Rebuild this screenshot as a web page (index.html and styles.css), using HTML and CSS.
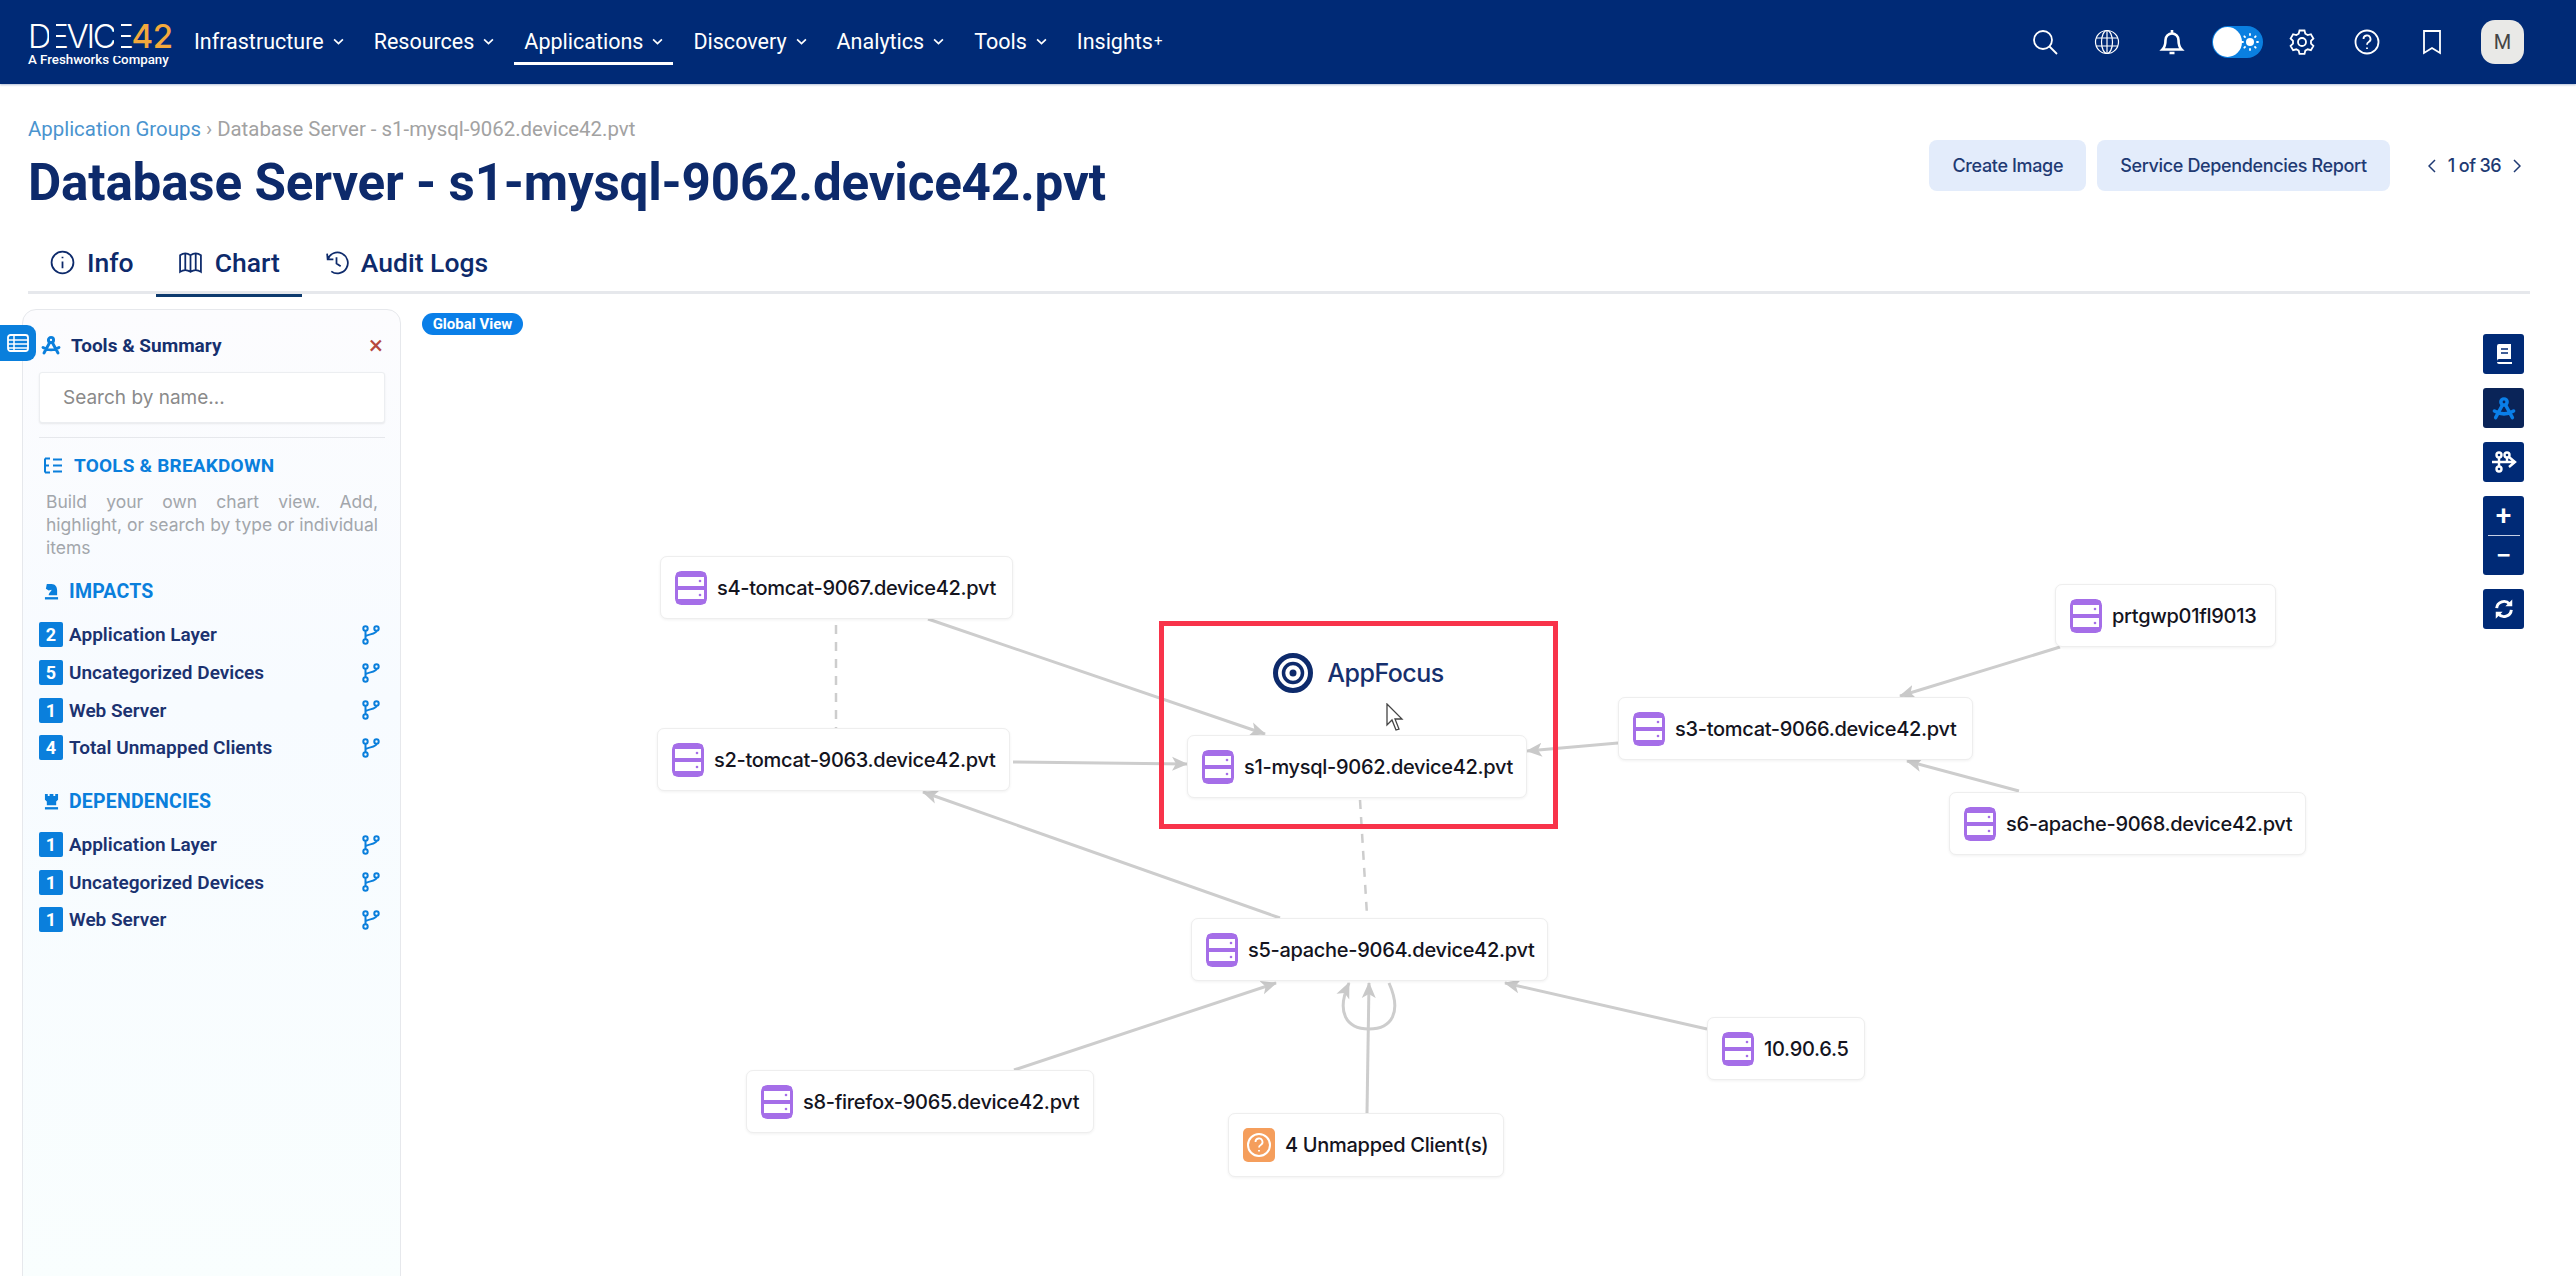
FILE: index.html
```html
<!DOCTYPE html>
<html>
<head>
  <title>Database Server - s1-mysql-9062.device42.pvt</title>
  <link rel="stylesheet" href="styles.css">
</head>
<body>
  <svg class="svg-defs" width="0" height="0">
    <defs>
      <symbol id="server" viewBox="0 0 32 34">
        <rect x="1.5" y="1.5" width="29" height="31" rx="5" fill="none" stroke="currentColor" stroke-width="3"/>
        <rect x="1.5" y="15" width="29" height="4" fill="currentColor"/>
        <rect x="1" y="1" width="30" height="5" rx="2.5" fill="currentColor"/>
        <rect x="1" y="28" width="30" height="5" rx="2.5" fill="currentColor"/>
        <circle cx="25" cy="10" r="1.3" fill="currentColor"/>
        <circle cx="25" cy="24" r="1.3" fill="currentColor"/>
      </symbol>
      <symbol id="fork" viewBox="0 0 18 20">
        <g fill="none" stroke="currentColor" stroke-width="2">
          <circle cx="3.5" cy="3.5" r="2.2"/>
          <circle cx="14.5" cy="3.5" r="2.2"/>
          <circle cx="3.5" cy="16.5" r="2.2"/>
          <path d="M3.5 5.7v8.6M14.5 5.7c0 4-11 3.300-11 6.300"/>
        </g>
      </symbol>
      <symbol id="compass" viewBox="0 0 20 20">
        <g fill="none" stroke="currentColor" stroke-width="2.900" stroke-linecap="round">
          <circle cx="10" cy="5" r="2.600"/>
          <path d="M8.700 7.500 3 18M11.300 7.500 17 18M2 12.500c5 3 11 3 16 0"/>
        </g>
      </symbol>
    </defs>
  </svg>

  <nav class="topbar">
    <div class="logo">
      <div class="logo-main">D<span class="logo-e">E</span>VIC<span class="logo-e">E</span><span class="logo-num">42</span></div>
      <div class="logo-sub">A Freshworks Company</div>
    </div>
    <ul class="menu">
      <li class="menu-item">Infrastructure<svg class="chev" viewBox="0 0 10 6"><path d="M1 1l4 4 4-4"/></svg></li>
      <li class="menu-item">Resources<svg class="chev" viewBox="0 0 10 6"><path d="M1 1l4 4 4-4"/></svg></li>
      <li class="menu-item active">Applications<svg class="chev" viewBox="0 0 10 6"><path d="M1 1l4 4 4-4"/></svg></li>
      <li class="menu-item">Discovery<svg class="chev" viewBox="0 0 10 6"><path d="M1 1l4 4 4-4"/></svg></li>
      <li class="menu-item">Analytics<svg class="chev" viewBox="0 0 10 6"><path d="M1 1l4 4 4-4"/></svg></li>
      <li class="menu-item">Tools<svg class="chev" viewBox="0 0 10 6"><path d="M1 1l4 4 4-4"/></svg></li>
      <li class="menu-item">Insights<span class="menu-plus">+</span></li>
    </ul>
    <div class="top-icons">
      <svg class="top-icon tight" viewBox="0 0 26 26"><circle cx="11" cy="11" r="9"/><path d="M17.500 17.500 25 25"/></svg>
      <svg class="top-icon thin" viewBox="0 0 26 26"><circle cx="13" cy="13" r="11.500"/><ellipse cx="13" cy="13" rx="5.500" ry="11.500"/><path d="M2 9h22M2 17h22M13 1.500v23"/></svg>
      <svg class="top-icon bell" viewBox="0 0 26 26"><path d="M3.500 20.500c2-2 3-4.500 3-9.500a6.500 6.500 0 0 1 13 0c0 5 1 7.500 3 9.500z"/><path d="M13 1v3.500M10.500 24h5"/></svg>
      <div class="toggle">
        <span class="toggle-knob"></span>
        <svg class="toggle-sun" viewBox="0 0 18 18"><circle cx="9" cy="9" r="4" fill="#fff"/><path d="M9 1v1M9 16v1M1 9h1M16 9h1M3.300 3.300l.7.7M14 14l.7.7M3.300 14.700l.7-.7M14 4l.7-.7" stroke="#fff" stroke-width="1.800" stroke-linecap="round"/></svg>
      </div>
      <svg class="top-icon" viewBox="0 0 26 26"><path d="M10.500 1.500h5l.8 3.200 2.400 1.400 3.200-.9 2.500 4.300-2.400 2.300v2.800l2.400 2.300-2.500 4.300-3.200-.9-2.400 1.400-.8 3.200h-5l-.8-3.200-2.400-1.400-3.200.9-2.500-4.300 2.400-2.300v-2.800L1.600 9.500l2.500-4.300 3.200.9 2.400-1.400z"/><circle cx="13" cy="13" r="4"/></svg>
      <svg class="top-icon" viewBox="0 0 26 26"><circle cx="13" cy="13" r="11.500"/><path d="M9.500 10a3.500 3.500 0 1 1 5.200 3c-1.200.7-1.700 1.400-1.700 2.800M13 18.500v1.500"/></svg>
      <svg class="top-icon tight" viewBox="0 0 26 26"><path d="M5 2h16v22l-8-5-8 5z"/></svg>
      <div class="avatar">M</div>
    </div>
  </nav>

  <header class="page-head">
    <div class="head-left">
      <div class="crumbs"><span class="crumb-link">Application Groups</span> › Database Server - s1-mysql-9062.device42.pvt</div>
      <h1 class="page-title">Database Server - s1-mysql-9062.device42.pvt</h1>
    </div>
    <div class="head-actions">
      <button class="soft-btn">Create Image</button>
      <button class="soft-btn">Service Dependencies Report</button>
      <div class="pager">
        <svg class="pager-arrow" viewBox="0 0 8 14"><path d="M7 1 1 7l6 6"/></svg>
        <span>1 of 36</span>
        <svg class="pager-arrow" viewBox="0 0 8 14"><path d="m1 1 6 6-6 6"/></svg>
      </div>
    </div>
  </header>

  <div class="tabs">
    <div class="tab">
      <svg class="tab-icon" viewBox="0 0 24 24"><circle cx="12" cy="12" r="10.500"/><path d="M12 11v6.500M12 6.500V8"/></svg>Info
    </div>
    <div class="tab active">
      <svg class="tab-icon" viewBox="0 0 24 24"><path d="M2 5c3-2 7-2 10 0 3-2 7-2 10 0v16c-3-2-7-2-10 0-3-2-7-2-10 0zM12 5v16M7 3.500v16M17 3.500v16"/></svg>Chart
    </div>
    <div class="tab">
      <svg class="tab-icon" viewBox="0 0 24 24"><path d="M3 3.500 3.500 9H9M3.500 9A10 10 0 1 1 7 20.500M12 7v6l4 2.500"/></svg>Audit Logs
    </div>
  </div>

  <main class="workspace">
    <aside class="sidepanel">
      <div class="panel-title">
        <svg class="panel-title-icon"><use href="#compass"/></svg>
        <span>Tools &amp; Summary</span>
        <span class="panel-close">×</span>
      </div>
      <input class="panel-search" placeholder="Search by name...">
      <hr class="panel-rule">
      <div class="section-head">
        <svg class="section-icon" viewBox="0 0 18 16"><path d="M1 1h5M1 1v14M1 8h4M1 15h5M9 2h9M9 8h9M9 14h9" fill="none" stroke="currentColor" stroke-width="2"/></svg>
        TOOLS &amp; BREAKDOWN
      </div>
      <p class="panel-desc">Build your own chart view. Add, highlight, or search by type or individual items</p>
      <div class="section-head section-sm">
        <svg class="section-icon" viewBox="0 0 16 18"><path d="M3 1h5c4 0 6 3 6 7v5H5c0-3 3-4 3-6L5 8 2 6z" fill="currentColor"/><rect x="1" y="15" width="14" height="2.500" fill="currentColor"/></svg>
        IMPACTS
      </div>
      <ul class="count-list">
        <li class="count-row"><span class="count">2</span><span class="count-name">Application Layer</span><svg class="fork"><use href="#fork"/></svg></li>
        <li class="count-row"><span class="count">5</span><span class="count-name">Uncategorized Devices</span><svg class="fork"><use href="#fork"/></svg></li>
        <li class="count-row"><span class="count">1</span><span class="count-name">Web Server</span><svg class="fork"><use href="#fork"/></svg></li>
        <li class="count-row"><span class="count">4</span><span class="count-name">Total Unmapped Clients</span><svg class="fork"><use href="#fork"/></svg></li>
      </ul>
      <div class="section-head section-sm section-dep">
        <svg class="section-icon" viewBox="0 0 16 18"><path d="M1 1h3v2h2V1h4v2h2V1h3v6l-2 2v4H3V9L1 7z" fill="currentColor"/><rect x="1" y="15" width="14" height="2.500" fill="currentColor"/></svg>
        DEPENDENCIES
      </div>
      <ul class="count-list list-dep">
        <li class="count-row"><span class="count">1</span><span class="count-name">Application Layer</span><svg class="fork"><use href="#fork"/></svg></li>
        <li class="count-row"><span class="count">1</span><span class="count-name">Uncategorized Devices</span><svg class="fork"><use href="#fork"/></svg></li>
        <li class="count-row"><span class="count">1</span><span class="count-name">Web Server</span><svg class="fork"><use href="#fork"/></svg></li>
      </ul>
    </aside>

    <div class="panel-tab">
      <svg viewBox="0 0 22 18" width="22" height="18"><rect x="1" y="1" width="20" height="16" rx="2.500" fill="none" stroke="#fff" stroke-width="1.800"/><path d="M1 6h20M1 10h20M1 14h20M7 1v16" stroke="#fff" stroke-width="1.500"/></svg>
    </div>

    <section class="chart">
      <span class="global-badge">Global View</span>

      <svg class="edges" width="2576" height="1276" viewBox="0 0 2576 1276">
        <defs>
          <marker id="head" markerWidth="18" markerHeight="16" refX="15" refY="8" orient="auto" markerUnits="userSpaceOnUse">
            <path d="M0 1 16 8 0 15 4 8z" fill="#c9c9c9"/>
          </marker>
        </defs>
        <g fill="none" stroke="#cdcdcd" stroke-width="3">
          <path marker-end="url(#head)" d="M928 619 1265 734"/>
          <path marker-end="url(#head)" d="M1013 762 1187 764"/>
          <path marker-end="url(#head)" d="M1618 743 1527 751"/>
          <path marker-end="url(#head)" d="M1280 918 923 792"/>
          <path marker-end="url(#head)" d="M1014 1070 1276 983"/>
          <path marker-end="url(#head)" d="M1367 1113 1369 983"/>
          <path marker-end="url(#head)" d="M1707 1029 1505 983"/>
          <path marker-end="url(#head)" d="M2060 647 1900 696"/>
          <path marker-end="url(#head)" d="M2019 791 1907 761"/>
          <path marker-end="url(#head)" d="M1389 983C1402 1012 1392 1029 1369 1029C1346 1029 1336 1012 1349 983"/>
          <path stroke-dasharray="9 8" stroke-width="2.500" d="M836 625V728"/>
          <path stroke-dasharray="9 8" stroke-width="2.500" d="M1360 800 1367 915"/>
        </g>
      </svg>

      <div class="focus-box">
        <div class="focus-brand">
          <svg class="focus-mark" viewBox="0 0 40 40"><circle cx="20" cy="20" r="17.500" fill="none" stroke="#0d2a6b" stroke-width="5"/><circle cx="20" cy="20" r="9.500" fill="none" stroke="#0d2a6b" stroke-width="3.500"/><circle cx="20" cy="20" r="3.500" fill="#0d2a6b"/></svg>
          AppFocus
        </div>
      </div>

      <div class="node n-s4"><svg class="node-icon"><use href="#server"/></svg>s4-tomcat-9067.device42.pvt</div>
      <div class="node n-s2"><svg class="node-icon"><use href="#server"/></svg>s2-tomcat-9063.device42.pvt</div>
      <div class="node n-s1"><svg class="node-icon"><use href="#server"/></svg>s1-mysql-9062.device42.pvt</div>
      <div class="node n-s3"><svg class="node-icon"><use href="#server"/></svg>s3-tomcat-9066.device42.pvt</div>
      <div class="node n-prtg"><svg class="node-icon"><use href="#server"/></svg>prtgwp01fl9013</div>
      <div class="node n-s6"><svg class="node-icon"><use href="#server"/></svg>s6-apache-9068.device42.pvt</div>
      <div class="node n-s5"><svg class="node-icon"><use href="#server"/></svg>s5-apache-9064.device42.pvt</div>
      <div class="node n-ip"><svg class="node-icon"><use href="#server"/></svg>10.90.6.5</div>
      <div class="node n-s8"><svg class="node-icon"><use href="#server"/></svg>s8-firefox-9065.device42.pvt</div>
      <div class="node n-un">
        <svg class="node-icon" viewBox="0 0 32 34"><rect width="32" height="34" rx="5" fill="#f59e5c"/><circle cx="16" cy="17" r="11" fill="none" stroke="#fff" stroke-width="2"/><path d="M12.500 14a3.500 3.500 0 1 1 5.200 3c-1.100.7-1.700 1.300-1.700 2.500M16 22v1.500" fill="none" stroke="#fff" stroke-width="1.800"/></svg>
        4 Unmapped Client(s)
      </div>

      <svg class="cursor" width="18" height="28" viewBox="0 0 18 28"><path d="M1 1v21l5-5 4 10 3-1-4-10h7z" fill="#fff" stroke="#444" stroke-width="1.300"/></svg>

      <div class="chart-tools">
        <button class="tool-btn">
          <svg viewBox="0 0 20 22" width="20" height="22"><path d="M3 3a2 2 0 0 1 2-2h12v15H5a2 2 0 0 0-2 2z" fill="#fff"/><path d="M5 19h13v2H5a2 2 0 0 1-2-2z" fill="#fff"/><path d="M7 6h7M7 10h7" stroke="#002a76" stroke-width="1.500"/></svg>
        </button>
        <button class="tool-btn tool-dark"><svg width="24" height="24" class="tool-compass"><use href="#compass"/></svg></button>
        <button class="tool-btn">
          <svg viewBox="0 0 26 22" width="26" height="22" fill="none" stroke="#fff" stroke-width="2.400"><circle cx="8" cy="4" r="2.500"/><circle cx="16" cy="4" r="2.500"/><circle cx="8" cy="18" r="2.500"/><path d="M1 11h22M18 6l6 5-6 5M8 7v8M16 7v4"/></svg>
        </button>
        <div class="zoom-group">
          <span class="zoom-part">+</span>
          <span class="zoom-line"></span>
          <span class="zoom-part">−</span>
        </div>
        <button class="tool-btn">
          <svg viewBox="0 0 24 24" width="22" height="22" fill="none" stroke="#fff" stroke-width="3.200"><path d="M4 11a8 8 0 0 1 14-4.500M20 13a8 8 0 0 1-14 4.500"/><path d="M21 1.500V9h-7.500zM3 22.500V15h7.500z" fill="#fff" stroke="none"/></svg>
        </button>
      </div>
    </section>
  </main>
</body>
</html>
```

FILE: styles.css
```css
:root {
  --navy: #002a76;
  --title: #0d2a6b;
  --blue: #0a7fdc;
  --purple: #a56ee8;
  --edge: #cdcdcd;
}

* {
  box-sizing: border-box;
}

html, body {
  height: 100%;
}

body {
  margin: 0;
  font-family: 'Roboto', sans-serif;
  background: #fff;
  color: var(--title);
  overflow: hidden;
}

.svg-defs {
  position: absolute;
}

/* top bar */
.topbar {
  height: 84px;
  background: var(--navy);
  display: flex;
  align-items: center;
  padding: 0 52px 0 28px;
  color: #fff;
  box-shadow: 0 1px 2px rgba(0, 42, 118, 0.3);
}

.logo {
  width: 141px;
  margin-right: 15px;
  padding-top: 4px;
}

.logo-main {
  font-family: 'Inter', sans-serif;
  font-weight: 300;
  font-size: 33px;
  line-height: 32px;
  letter-spacing: -2.400px;
  white-space: nowrap;
}

/* the logo's E has no stem, a navy bar covers it */
.logo-e {
  position: relative;
}

.logo-e::before {
  content: "";
  position: absolute;
  left: 0;
  top: 0;
  width: 7px;
  height: 100%;
  background: var(--navy);
}

.logo-num {
  color: #f3a93c;
  font-weight: 500;
  letter-spacing: -0.5px;
}

.logo-sub {
  font-size: 13.300px;
  line-height: 16px;
  font-weight: 500;
  white-space: nowrap;
}

.menu {
  display: flex;
  list-style: none;
  margin: 0;
  padding: 0;
  height: 100%;
  align-items: center;
}

.menu-item {
  position: relative;
  display: flex;
  align-items: center;
  gap: 9px;
  font-size: 21.500px;
  padding: 0 10px 2px;
  margin-right: 10px;
  height: 44px;
}

.menu-plus {
  font-size: 15px;
  margin-left: -8px;
}

.menu-item.active::after {
  content: "";
  position: absolute;
  left: 0;
  right: 0;
  bottom: -1px;
  height: 3px;
  background: #fff;
}

.chev {
  width: 11px;
  height: 7px;
  fill: none;
  stroke: #fff;
  stroke-width: 1.500;
}

.top-icons {
  margin-left: auto;
  display: flex;
  align-items: center;
}

.top-icon {
  width: 26px;
  height: 26px;
  margin-right: 39px;
  fill: none;
  stroke: #fff;
  stroke-width: 1.800;
}

.top-icon.tight {
  margin-right: 36px;
}

.top-icon.thin {
  stroke-width: 1.200;
}

.top-icon.bell {
  margin-right: 27px;
  stroke-width: 2.600;
}

.toggle {
  position: relative;
  width: 51px;
  height: 32px;
  border-radius: 16px;
  background: #0a7fe0;
  margin-right: 26px;
}

.toggle-knob {
  position: absolute;
  left: 1px;
  top: 1px;
  width: 29px;
  height: 30px;
  border-radius: 50%;
  background: #fff;
}

.toggle-sun {
  position: absolute;
  right: 4px;
  top: 7px;
  width: 18px;
  height: 18px;
}

.avatar {
  width: 43px;
  height: 44px;
  border-radius: 14px;
  background: #e9e9e7;
  color: #444;
  display: flex;
  align-items: center;
  justify-content: center;
  font-size: 20px;
}

/* page header */
.page-head {
  display: flex;
  justify-content: space-between;
  padding: 32px 55px 0 28px;
  height: 152px;
}

.crumbs {
  font-size: 20.400px;
  line-height: 24px;
  color: #a2a2a2;
  padding-top: 1px;
}

.crumb-link {
  color: #4a94cf;
}

.page-title {
  margin: 13px 0 0;
  font-size: 51.200px;
  line-height: 58px;
  font-weight: 700;
  color: var(--title);
  letter-spacing: -0.2px;
  white-space: nowrap;
}

.head-actions {
  display: flex;
  align-items: flex-start;
  gap: 11px;
  padding-top: 24px;
}

.soft-btn {
  height: 51px;
  padding: 0 23px;
  border: none;
  border-radius: 8px;
  background: #e3ecfb;
  color: #1f3a73;
  font-family: 'Inter', sans-serif;
  font-size: 18px;
  font-weight: 500;
  letter-spacing: -0.35px;
}

.pager {
  display: flex;
  align-items: center;
  gap: 12px;
  height: 51px;
  margin-left: 27px;
  font-family: 'Inter', sans-serif;
  font-size: 18px;
  font-weight: 500;
  letter-spacing: -0.6px;
  color: #1f3a73;
}

.pager-arrow {
  width: 8px;
  height: 14px;
  fill: none;
  stroke: #1f3a73;
  stroke-width: 1.500;
}

/* tabs */
.tabs {
  display: flex;
  height: 58px;
  margin: 0 46px 0 28px;
  border-bottom: 3px solid #e6e8ec;
  font-size: 26.500px;
  font-weight: 500;
  color: var(--title);
}

.tab {
  position: relative;
  display: flex;
  align-items: center;
  gap: 12px;
  height: 58px;
  padding: 0 22px 6px;
}

.tab.active::after {
  content: "";
  position: absolute;
  left: 0;
  right: 0;
  bottom: -3px;
  height: 3px;
  background: #0d3a6e;
}

.tab-icon {
  width: 25px;
  height: 25px;
  fill: none;
  stroke: var(--title);
  stroke-width: 1.700;
}

/* workspace */
.workspace {
  position: relative;
  display: flex;
  height: 982px;
  padding-left: 22px;
  padding-top: 15px;
}

.sidepanel {
  width: 379px;
  height: 980px;
  padding: 16px 16px 0;
  border: 1px solid #e6e8ec;
  border-radius: 14px 14px 0 0;
  background: linear-gradient(180deg, #fcfcfe 0%, #f7fbff 40%, #f9fefe 100%);
}

.panel-title {
  display: flex;
  align-items: center;
  height: 38px;
  padding-left: 2px;
  font-size: 19px;
  font-weight: 700;
  color: #16306e;
}

.panel-title-icon {
  width: 20px;
  height: 20px;
  margin-right: 10px;
  color: var(--blue);
}

.panel-close {
  margin-left: auto;
  margin-right: 1px;
  font-size: 26px;
  font-weight: 400;
  color: #b5473f;
}

.panel-search {
  display: block;
  width: 346px;
  height: 51px;
  margin-top: 8px;
  padding: 0 23px;
  border: 1px solid #eceef1;
  border-radius: 3px;
  box-shadow: 0 1px 2px rgba(0, 0, 0, 0.08);
  background: #fff;
  font-family: 'Inter', sans-serif;
  font-size: 19px;
  outline: none;
}

.panel-search::placeholder {
  color: #8a8a8a;
  opacity: 1;
}

.panel-rule {
  margin: 14px 0 0;
  width: 346px;
  border: none;
  border-top: 1px solid #e6e8ec;
}

.section-head {
  display: flex;
  align-items: center;
  gap: 12px;
  margin-top: 15px;
  padding-left: 5px;
  height: 24px;
  font-size: 19px;
  font-weight: 700;
  color: var(--blue);
  letter-spacing: 0.2px;
}

.section-icon {
  width: 18px;
  height: 17px;
  color: var(--blue);
  flex-shrink: 0;
}

.section-sm {
  gap: 10px;
  margin-top: 20px;
  font-size: 19.500px;
}

.section-sm .section-icon {
  width: 15px;
}

.section-dep {
  margin-top: 23px;
}

.panel-desc {
  margin: 13px 0 0;
  padding: 0 6px 0 7px;
  font-family: 'Inter', sans-serif;
  font-size: 17.500px;
  line-height: 23px;
  color: #a2a6ab;
  text-align: justify;
}

.count-list {
  list-style: none;
  margin: 13px 0 0;
  padding: 0;
}

.count-list.list-dep {
  margin-top: 12px;
}

.count-row {
  display: flex;
  align-items: center;
  height: 37.700px;
  font-size: 19px;
  font-weight: 600;
  color: #1b3270;
}

.count {
  width: 24px;
  height: 25px;
  margin-right: 6px;
  border-radius: 2px;
  background: var(--blue);
  color: #fff;
  font-size: 18px;
  font-weight: 700;
  display: flex;
  align-items: center;
  justify-content: center;
}

.count-name {
  flex: 1;
}

.fork {
  width: 18px;
  height: 20px;
  margin-right: 4px;
  color: var(--blue);
}

.panel-tab {
  position: absolute;
  left: 0;
  top: 31px;
  width: 36px;
  height: 36px;
  border-radius: 0 9px 9px 0;
  background: var(--blue);
  display: flex;
  align-items: center;
  justify-content: center;
}

/* chart, coordinates are offset from the chart box */
.chart {
  position: absolute;
  left: 0;
  top: -294px;
  width: 2576px;
  height: 1276px;
  pointer-events: none;
}

.edges {
  position: absolute;
  left: 0;
  top: 0;
}

.global-badge {
  position: absolute;
  left: 422px;
  top: 313px;
  height: 22px;
  width: 101px;
  border-radius: 11px;
  background: #0a7fe8;
  color: #fff;
  font-size: 15px;
  font-weight: 700;
  text-align: center;
  line-height: 22px;
}

.focus-box {
  position: absolute;
  left: 1159px;
  top: 621px;
  width: 399px;
  height: 208px;
  border: 5px solid #f8334a;
}

.focus-brand {
  display: flex;
  align-items: center;
  justify-content: center;
  gap: 14px;
  margin-top: 27px;
  font-family: 'Inter', sans-serif;
  font-size: 25px;
  font-weight: 500;
  letter-spacing: -0.5px;
  color: #16306e;
}

.focus-mark {
  width: 40px;
  height: 40px;
}

.cursor {
  position: absolute;
  left: 1386px;
  top: 703px;
}

.node {
  position: absolute;
  display: flex;
  align-items: center;
  gap: 10px;
  height: 63px;
  padding-left: 14px;
  background: #fff;
  border: 1px solid #eeeeee;
  border-radius: 7px;
  box-shadow: 0 1px 3px rgba(0, 0, 0, 0.06);
  font-family: 'Inter', sans-serif;
  font-size: 20px;
  font-weight: 500;
  letter-spacing: -0.3px;
  color: #14141e;
  white-space: nowrap;
}

.node-icon {
  width: 32px;
  height: 34px;
  color: var(--purple);
  flex-shrink: 0;
}

.n-s4 { left: 660px; top: 556px; width: 353px; }
.n-s2 { left: 657px; top: 728px; width: 353px; }
.n-s1 { left: 1187px; top: 735px; width: 340px; }
.n-s3 { left: 1618px; top: 697px; width: 355px; }
.n-prtg { left: 2055px; top: 584px; width: 221px; }
.n-s6 { left: 1949px; top: 792px; width: 357px; }
.n-s5 { left: 1191px; top: 918px; width: 357px; }
.n-ip { left: 1707px; top: 1017px; width: 158px; }
.n-s8 { left: 746px; top: 1070px; width: 348px; }
.n-un { left: 1228px; top: 1113px; width: 276px; height: 64px; }

.chart-tools {
  position: absolute;
  left: 2483px;
  top: 334px;
  width: 41px;
  display: flex;
  flex-direction: column;
  gap: 14px;
}

.tool-btn {
  width: 41px;
  height: 40px;
  padding: 0;
  border: none;
  border-radius: 3px;
  background: var(--navy);
  display: flex;
  align-items: center;
  justify-content: center;
}

.tool-dark {
  background: #0a2458;
}

.tool-compass {
  color: #0a7fe8;
}

.zoom-group {
  height: 79px;
  border-radius: 3px;
  background: var(--navy);
  color: #fff;
  display: flex;
  flex-direction: column;
  align-items: center;
  font-size: 28px;
  font-weight: 500;
  line-height: 39px;
}

.zoom-part {
  height: 39px;
}

.zoom-line {
  width: 32px;
  height: 1px;
  background: #c5cfe4;
}
```
